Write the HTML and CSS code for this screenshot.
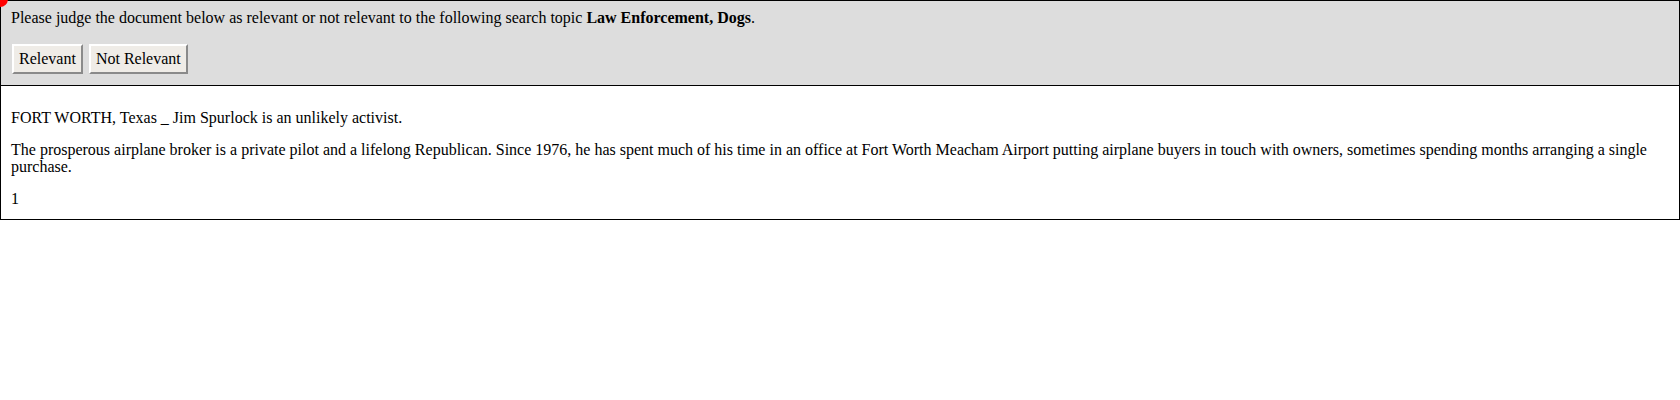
FILE: index.html
```html
<!DOCTYPE html>
<html>
<head>
<meta charset="utf-8">
<link rel="stylesheet" href="styles.css">
</head>
<body>
<span class="dot"></span>
<div class="judge">
  <div class="prompt">Please judge the document below as relevant or not relevant to the following search topic <b>Law Enforcement, Dogs</b>.</div>
  <div class="actions">
    <button class="btn">Relevant</button>
    <button class="btn">Not Relevant</button>
  </div>
</div>
<div class="doc">
  <p>FORT WORTH, Texas _ Jim Spurlock is an unlikely activist.</p>
  <p>The prosperous airplane broker is a private pilot and a lifelong Republican. Since 1976, he has spent much of his time in an office at Fort Worth Meacham Airport putting airplane buyers in touch with owners, sometimes spending months arranging a single purchase.</p>
  <p class="last">1</p>
</div>
</body>
</html>
```

FILE: styles.css
```css
html, body {
  margin: 0;
  padding: 0;
  background: #fff;
}
body {
  font-family: "Liberation Serif", "Times New Roman", serif;
  font-size: 16px;
  color: #000;
  position: relative;
  overflow: hidden;
  height: 400px;
}
.dot {
  position: absolute;
  left: -8px;
  top: -9px;
  width: 16px;
  height: 16px;
  border-radius: 50%;
  background: #ff0000;
  z-index: 2;
}
.judge {
  background: #dddddd;
  border: 1px solid #000;
  padding: 8px 10px 11px 10px;
}
.prompt {
  line-height: 18px;
}
.actions {
  display: flex;
  gap: 6px;
  margin-top: 17px;
  padding-left: 1px;
}
.btn {
  font-family: "Liberation Serif", "Times New Roman", serif;
  font-size: 16px;
  color: #000;
  background: #efece7;
  border: 2px solid;
  border-color: #ffffff #8a8a8a #8a8a8a #ffffff;
  padding: 4px 5px 4px 5px;
  height: 30px;
  line-height: 18px;
  margin: 0;
}
.doc {
  border: 1px solid #000;
  border-top: 0;
  padding: 8px 10px 12px 10px;
}
.doc p {
  margin: 15px 0 0 0;
  line-height: 17px;
}
.doc p.last {
  margin-bottom: 0;
}
```
